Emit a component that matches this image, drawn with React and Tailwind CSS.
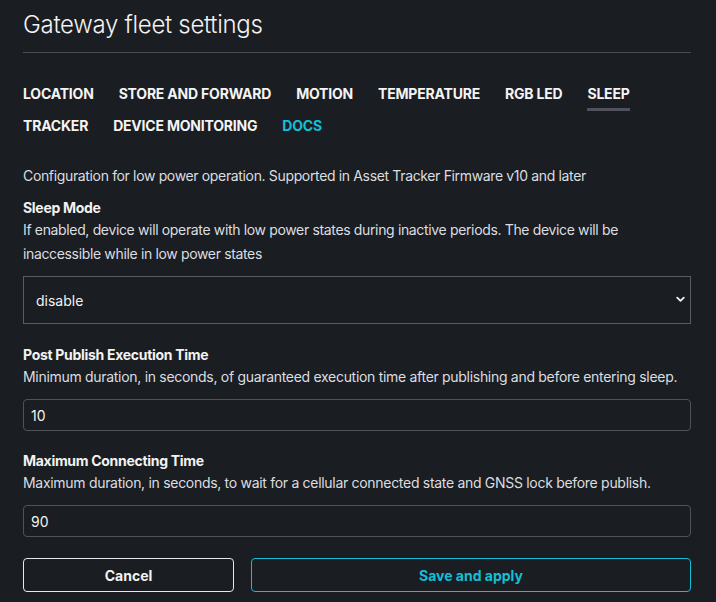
import React from "react";

const tabsRow = [
  "LOCATION",
  "STORE AND FORWARD",
  "MOTION",
  "TEMPERATURE",
  "RGB LED",
  "SLEEP",
  "TRACKER",
  "DEVICE MONITORING",
  "DOCS",
];

function Tab({ label }) {
  const active = label === "SLEEP";
  const docs = label === "DOCS";
  const border = active ? "border-[#50515c]" : "border-transparent";
  const color = docs ? "text-[#13bfd6]" : "text-[#f4f4f4]";
  return (
    <div
      className={`h-[27px] pb-[4px] border-b-[3px] text-[14px] leading-[20px] font-bold tracking-[-0.2px] ${border} ${color}`}
    >
      {label}
    </div>
  );
}

function Field({ label, desc, value, top }) {
  return (
    <div className={top}>
      <div className="text-[14px] leading-[20px] font-bold text-[#f2f2f2] tracking-[-0.3px]">{label}</div>
      <div className="text-[14px] leading-[24px] text-[#dcdde0] tracking-[-0.3px]">{desc}</div>
      <div className="mt-[10px] h-[32px] rounded-[4px] border border-[#50525a] flex items-center pl-[7px] text-[14px] text-[#f2f2f2]">
        {value}
      </div>
    </div>
  );
}

export default function App() {
  return (
    <div
      className="min-h-[602px] w-[716px] bg-[#1a1d21] pl-[23px] pr-[25px] pt-[10px]"
      style={{ fontFamily: "Inter, 'Noto Sans', sans-serif" }}
    >
      <div className="pb-[13px] border-b border-[#4b4c58]">
        <h1 className="text-[24px] leading-[29px] font-light text-[#f2f2f2] tracking-[-0.3px]">
          Gateway fleet settings
        </h1>
      </div>

      <div className="mt-[31px] flex flex-wrap gap-x-[25px] gap-y-[5px]">
        {tabsRow.map((t) => (
          <Tab key={t} label={t} />
        ))}
      </div>

      <p className="mt-[21px] text-[14px] leading-[24px] text-[#dcdde0] tracking-[-0.35px]">
        Configuration for low power operation. Supported in Asset Tracker Firmware v10 and later
      </p>

      <div className="mt-[10px] text-[14px] leading-[20px] font-bold text-[#f2f2f2] tracking-[-0.3px]">
        Sleep Mode
      </div>
      <p className="text-[14px] leading-[24px] text-[#dcdde0] tracking-[-0.35px]">
        If enabled, device will operate with low power states during inactive periods. The device will be
        inaccessible while in low power states
      </p>

      <div className="mt-[10px] relative h-[48px] border border-[#5a5c65] flex items-center pl-[12px] text-[14px] text-[#f2f2f2]">
        <span>disable</span>
        <svg
          className="absolute right-[5px] top-[19px]"
          width="9"
          height="7"
          viewBox="0 0 9 7"
          fill="none"
        >
          <path d="M1.2 1.6 L4.5 4.9 L7.8 1.6" stroke="#f2f2f2" strokeWidth="1.8" strokeLinecap="round" strokeLinejoin="round" />
        </svg>
      </div>

      <Field
        top="mt-[21px]"
        label="Post Publish Execution Time"
        desc="Minimum duration, in seconds, of guaranteed execution time after publishing and before entering sleep."
        value="10"
      />
      <Field
        top="mt-[20px]"
        label="Maximum Connecting Time"
        desc="Maximum duration, in seconds, to wait for a cellular connected state and GNSS lock before publish."
        value="90"
      />

      <div className="mt-[21px] flex gap-[17px]">
        <button className="w-[211px] h-[34px] rounded-[4px] border border-[#e8e8e8] text-[14px] font-bold text-[#f2f2f2]">
          Cancel
        </button>
        <button className="flex-1 h-[34px] rounded-[4px] border border-[#13bfd6] text-[14px] font-bold text-[#13bfd6]">
          Save and apply
        </button>
      </div>
    </div>
  );
}
